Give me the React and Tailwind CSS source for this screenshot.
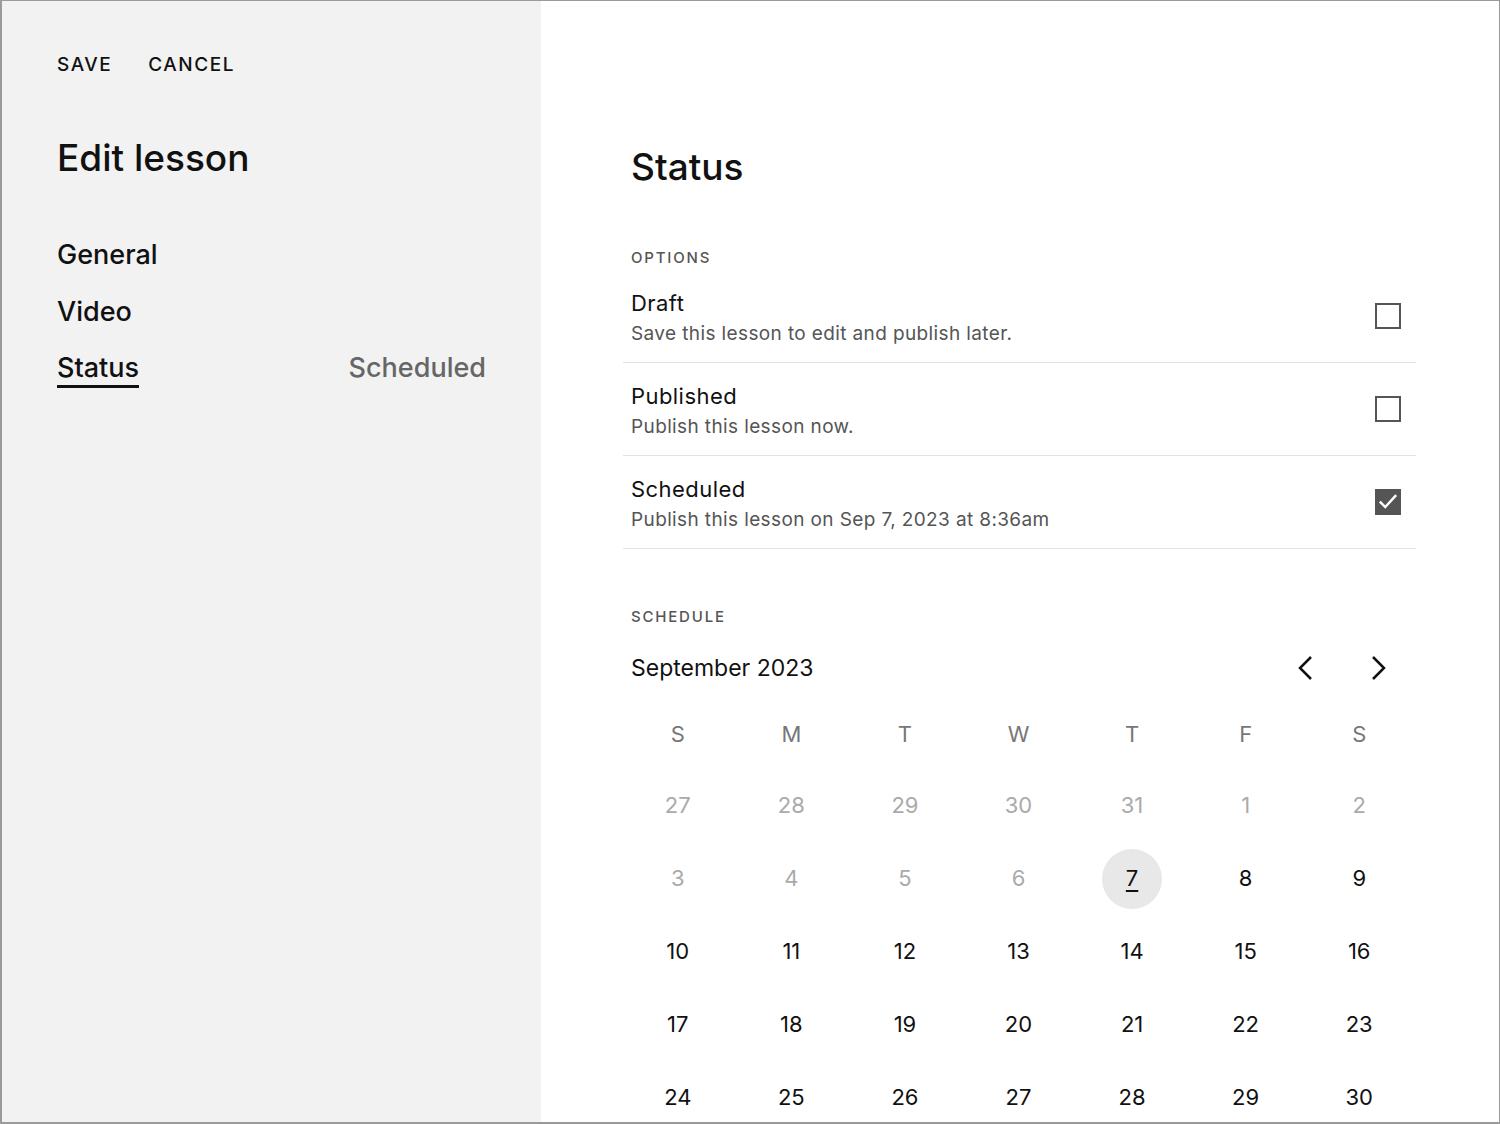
const font = { fontFamily: 'Inter, "Liberation Sans", sans-serif' };

const options = [
  { title: 'Draft', desc: 'Save this lesson to edit and publish later.', checked: false },
  { title: 'Published', desc: 'Publish this lesson now.', checked: false },
  { title: 'Scheduled', desc: 'Publish this lesson on Sep 7, 2023 at 8:36am', checked: true },
];

const weekdays = ['S', 'M', 'T', 'W', 'T', 'F', 'S'];

// [day, muted]
const days = [
  [27, true], [28, true], [29, true], [30, true], [31, true], [1, true], [2, true],
  [3, true], [4, true], [5, true], [6, true], [7, false], [8, false], [9, false],
  [10], [11], [12], [13], [14], [15], [16],
  [17], [18], [19], [20], [21], [22], [23],
  [24], [25], [26], [27], [28], [29], [30],
];

function Checkbox({ checked }) {
  if (checked) {
    return (
      <div className="w-[26px] h-[26px] bg-[#555] flex items-center justify-center">
        <svg viewBox="0 0 24 24" className="w-[22px] h-[22px]" fill="none" stroke="white" strokeWidth="2.6" strokeLinecap="square">
          <path d="M4 12.5l5 5L20 5.5" />
        </svg>
      </div>
    );
  }
  return <div className="w-[26px] h-[26px] border-2 border-[#555] bg-white" />;
}

function Chevron({ dir }) {
  return (
    <svg viewBox="0 0 16 24" className="w-[16px] h-[24px]" fill="none" stroke="#111" strokeWidth="2.5">
      {dir === 'left' ? <polyline points="14,1 3,12 14,23" /> : <polyline points="2,1 13,12 2,23" />}
    </svg>
  );
}

export default function App() {
  return (
    <div style={font} className="w-[1500px] h-[1124px] flex overflow-hidden border border-[#9a9a9a] border-l-2 border-b-2 text-[#111]">
      {/* ── Sidebar ── */}
      <aside className="w-[539px] shrink-0 bg-[#f2f2f2] pl-[55px] pr-[54px] pt-[52px]">
        <div className="flex gap-[36px] text-[19px] leading-[24px] font-medium tracking-[0.08em]">
          <span>SAVE</span>
          <span>CANCEL</span>
        </div>
        <h1 className="mt-[59px] text-[37px] leading-[44px] font-medium">Edit lesson</h1>
        <nav className="mt-[59px] flex flex-col gap-[24.5px] text-[27px] leading-[32px] font-medium">
          <span>General</span>
          <span>Video</span>
          <div className="flex justify-between">
            <span className="border-b-[3px] border-[#111] pb-[1px] -mb-[4px]">Status</span>
            <span className="text-[#666] mr-[1px]">Scheduled</span>
          </div>
        </nav>
      </aside>

      {/* ── Main ── */}
      <main className="flex-1 bg-white pl-[82px] pr-[83px] pt-[144px]">
        <h2 className="px-2 text-[37px] leading-[44px] font-medium">Status</h2>

        <div className="mt-[59px] mb-[2px] px-2 text-[15px] leading-[20px] font-medium tracking-[0.12em] text-[#555]">OPTIONS</div>
        {options.map((o) => (
          <div key={o.title} className="flex items-center justify-between px-2 pt-[19px] pb-[16px] border-b border-[#e2e2e2]">
            <div>
              <div className="text-[22px] leading-[28px] tracking-[0.02em]">{o.title}</div>
              <div className="mt-[5px] text-[19px] leading-[24px] tracking-[0.02em] text-[#555]">{o.desc}</div>
            </div>
            <div className="mr-[7px] -mt-[3px]">
              <Checkbox checked={o.checked} />
            </div>
          </div>
        ))}

        <div className="mt-[58px] px-2 text-[15px] leading-[20px] font-medium tracking-[0.12em] text-[#555]">SCHEDULE</div>
        <div className="mt-[27px] px-2 flex items-center justify-between">
          <span className="text-[23px] leading-[28px]">September 2023</span>
          <div className="flex items-center gap-[58px] mr-[21px]">
            <Chevron dir="left" />
            <Chevron dir="right" />
          </div>
        </div>

        <div className="mt-[17px] grid grid-cols-7 -ml-[2px]">
          {weekdays.map((d, i) => (
            <div key={i} className="h-[70px] flex items-center justify-center text-[22px] text-[#777]">{d}</div>
          ))}
          {days.map(([d, muted], i) => {
            const selected = i === 11;
            return (
              <div key={i} className="h-[73px] flex items-center justify-center">
                <span
                  className={`w-[60px] h-[60px] rounded-full flex items-center justify-center text-[22px] ${
                    selected ? 'bg-[#e8e8e8] underline underline-offset-4' : ''
                  } ${muted ? 'text-[#aaa]' : 'text-[#111]'}`}
                >
                  {d}
                </span>
              </div>
            );
          })}
        </div>
      </main>
    </div>
  );
}
